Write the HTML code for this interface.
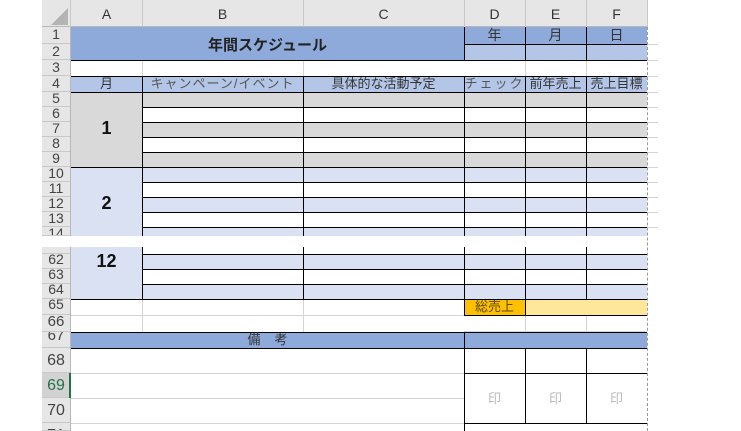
<!DOCTYPE html>
<html><head><meta charset="utf-8"><style>
*{margin:0;padding:0;box-sizing:border-box}
body{width:741px;height:431px;overflow:hidden;background:#fff;position:relative;font-family:"Liberation Sans","Noto Sans CJK JP",sans-serif}
div{position:absolute}
.f{}
.h{height:1px;background:#000}
.v{width:1px;background:#000}
.gh{height:1px;background:#d4d4d4}
.gv{width:1px;background:#d4d4d4}
.rh{left:42px;width:28px;text-align:center;color:#444;font-size:14px;overflow:hidden;border-bottom:1px solid #c8c8c8;background:#e6e6e6}
.t{text-align:center;color:#333;font-size:13px;white-space:nowrap}
</style></head><body>
<!-- column header -->
<div style="left:42px;top:0;width:605px;height:27px;background:#e6e6e6;border-bottom:1px solid #b8b8b8"></div>
<div style="left:647px;top:0;width:1px;height:27px;background:#c8c8c8"></div>
<svg style="position:absolute;left:50px;top:8px" width="18" height="18"><polygon points="18,0 18,17 1,17" fill="#b4b4b4"/></svg>
<div style="left:70px;top:0;width:1px;height:27px;background:#c8c8c8"></div>
<div class="t" style="left:71px;top:6px;width:71px;font-size:14px">A</div>
<div style="left:142px;top:0;width:1px;height:27px;background:#c8c8c8"></div>
<div class="t" style="left:142px;top:6px;width:161px;font-size:14px">B</div>
<div style="left:303px;top:0;width:1px;height:27px;background:#c8c8c8"></div>
<div class="t" style="left:303px;top:6px;width:161px;font-size:14px">C</div>
<div style="left:464px;top:0;width:1px;height:27px;background:#c8c8c8"></div>
<div class="t" style="left:464px;top:6px;width:61px;font-size:14px">D</div>
<div style="left:525px;top:0;width:1px;height:27px;background:#c8c8c8"></div>
<div class="t" style="left:525px;top:6px;width:61px;font-size:14px">E</div>
<div style="left:586px;top:0;width:1px;height:27px;background:#c8c8c8"></div>
<div class="t" style="left:586px;top:6px;width:61px;font-size:14px">F</div>

<!-- row headers -->
<div style="left:42px;top:27px;width:29px;height:404px;background:#e6e6e6"></div>
<div style="left:70px;top:27px;width:1px;height:404px;background:#b8b8b8"></div>
<div class="rh" style="top:27px;height:17px;line-height:14px">1</div>
<div class="rh" style="top:44px;height:16px;line-height:14px">2</div>
<div class="rh" style="top:60px;height:16px;line-height:14px">3</div>
<div class="rh" style="top:76px;height:16px;line-height:14px">4</div>
<div class="rh" style="top:92px;height:15px;line-height:12px">5</div>
<div class="rh" style="top:107px;height:15px;line-height:12px">6</div>
<div class="rh" style="top:122px;height:15px;line-height:12px">7</div>
<div class="rh" style="top:137px;height:15px;line-height:12px">8</div>
<div class="rh" style="top:152px;height:15px;line-height:12px">9</div>
<div class="rh" style="top:167px;height:15px;line-height:12px">10</div>
<div class="rh" style="top:182px;height:15px;line-height:12px">11</div>
<div class="rh" style="top:197px;height:15px;line-height:12px">12</div>
<div class="rh" style="top:212px;height:15px;line-height:12px">13</div>
<div class="rh" style="top:227px;height:9px;line-height:12px">14</div>
<div style="left:0;top:236px;width:741px;height:11px;background:#fff"></div>
<div class="rh" style="top:247px;height:7px;border-bottom:1px solid #c8c8c8"></div>
<div class="rh" style="top:254px;height:15px;line-height:10px">62</div>
<div class="rh" style="top:269px;height:15px;line-height:10px">63</div>
<div class="rh" style="top:284px;height:15px;line-height:10px">64</div>
<div class="rh" style="top:299px;height:16px;line-height:10px">65</div>
<div class="rh" style="top:315px;height:17px;line-height:14px;font-size:15px">66</div>
<div class="rh" style="top:332px;height:16px;line-height:8px;font-size:15px">67</div>
<div class="rh" style="top:348px;height:25px;line-height:25px;font-size:16px">68</div>
<div class="rh" style="top:373px;height:25px;line-height:25px;font-size:16px;background:#d2d2d2;color:#217346">69</div>
<div style="left:69px;top:373px;width:2px;height:25px;background:#217346"></div>
<div class="rh" style="top:398px;height:25px;line-height:25px;font-size:16px">70</div>
<div class="rh" style="top:423px;height:8px;line-height:25px;font-size:16px">71</div>

<!-- fills -->
<div style="left:71px;top:27px;width:393px;height:33px;background:#8eaadb"></div>
<div style="left:464px;top:27px;width:183px;height:17px;background:#8eaadb"></div>
<div style="left:464px;top:44px;width:183px;height:16px;background:#b4c6e7"></div>
<div style="left:71px;top:76px;width:576px;height:16px;background:#b4c6e7"></div>
<div style="left:71px;top:92px;width:71px;height:75px;background:#d9d9d9"></div>
<div style="left:142px;top:92px;width:505px;height:15px;background:#d9d9d9"></div>
<div style="left:142px;top:122px;width:505px;height:15px;background:#d9d9d9"></div>
<div style="left:142px;top:152px;width:505px;height:15px;background:#d9d9d9"></div>
<div style="left:71px;top:167px;width:71px;height:69px;background:#d9e1f2"></div>
<div style="left:142px;top:167px;width:505px;height:15px;background:#d9e1f2"></div>
<div style="left:142px;top:197px;width:505px;height:15px;background:#d9e1f2"></div>
<div style="left:142px;top:227px;width:505px;height:9px;background:#d9e1f2"></div>
<div style="left:71px;top:247px;width:71px;height:52px;background:#d9e1f2"></div>
<div style="left:142px;top:254px;width:505px;height:15px;background:#d9e1f2"></div>
<div style="left:142px;top:284px;width:505px;height:15px;background:#d9e1f2"></div>
<div style="left:464px;top:299px;width:61px;height:16px;background:#ffc000"></div>
<div style="left:525px;top:299px;width:122px;height:16px;background:#ffe699"></div>
<div style="left:71px;top:332px;width:576px;height:16px;background:#8eaadb"></div>

<!-- light gridlines -->
<div class="gv" style="left:142px;top:60px;height:16px"></div>
<div class="gv" style="left:303px;top:60px;height:16px"></div>
<div class="gv" style="left:525px;top:60px;height:16px"></div>
<div class="gv" style="left:586px;top:60px;height:16px"></div>
<div class="gv" style="left:142px;top:299px;height:33px"></div>
<div class="gv" style="left:303px;top:299px;height:33px"></div>
<div class="gv" style="left:525px;top:315px;height:17px"></div>
<div class="gv" style="left:586px;top:315px;height:17px"></div>
<div class="gh" style="left:71px;top:315px;width:393px"></div>
<div class="gh" style="left:464px;top:331px;width:183px"></div>
<div class="gh" style="left:71px;top:373px;width:393px"></div>
<div class="gh" style="left:71px;top:398px;width:393px"></div>
<div class="gh" style="left:71px;top:423px;width:393px"></div>
<div class="gh" style="left:647px;top:44px;width:11px"></div>
<div class="gh" style="left:647px;top:60px;width:11px"></div>
<div class="gh" style="left:647px;top:76px;width:11px"></div>
<div class="gh" style="left:647px;top:92px;width:11px"></div>
<div class="gh" style="left:647px;top:107px;width:11px"></div>
<div class="gh" style="left:647px;top:122px;width:11px"></div>
<div class="gh" style="left:647px;top:137px;width:11px"></div>
<div class="gh" style="left:647px;top:152px;width:11px"></div>
<div class="gh" style="left:647px;top:167px;width:11px"></div>
<div class="gh" style="left:647px;top:182px;width:11px"></div>
<div class="gh" style="left:647px;top:197px;width:11px"></div>
<div class="gh" style="left:647px;top:212px;width:11px"></div>
<div class="gh" style="left:647px;top:227px;width:11px"></div>

<!-- black horizontal lines -->
<div class="h" style="left:71px;top:60px;width:576px"></div>
<div class="h" style="left:464px;top:44px;width:183px"></div>
<div class="h" style="left:71px;top:76px;width:576px"></div>
<div class="h" style="left:71px;top:92px;width:576px"></div>
<div class="h" style="left:142px;top:107px;width:505px"></div>
<div class="h" style="left:142px;top:122px;width:505px"></div>
<div class="h" style="left:142px;top:137px;width:505px"></div>
<div class="h" style="left:142px;top:152px;width:505px"></div>
<div class="h" style="left:71px;top:167px;width:576px"></div>
<div class="h" style="left:142px;top:182px;width:505px"></div>
<div class="h" style="left:142px;top:197px;width:505px"></div>
<div class="h" style="left:142px;top:212px;width:505px"></div>
<div class="h" style="left:142px;top:227px;width:505px"></div>
<div class="h" style="left:142px;top:254px;width:505px"></div>
<div class="h" style="left:142px;top:269px;width:505px"></div>
<div class="h" style="left:142px;top:284px;width:505px"></div>
<div class="h" style="left:71px;top:299px;width:576px"></div>
<div class="h" style="left:464px;top:315px;width:183px"></div>
<div class="h" style="left:71px;top:332px;width:576px"></div>
<div class="h" style="left:71px;top:348px;width:576px"></div>
<div class="h" style="left:464px;top:373px;width:183px"></div>
<div class="h" style="left:464px;top:423px;width:183px"></div>

<!-- black vertical lines -->
<div class="v" style="left:142px;top:76px;height:160px"></div>
<div class="v" style="left:142px;top:247px;height:52px"></div>
<div class="v" style="left:303px;top:76px;height:160px"></div>
<div class="v" style="left:303px;top:247px;height:52px"></div>
<div class="v" style="left:464px;top:27px;height:33px"></div>
<div class="v" style="left:525px;top:27px;height:33px"></div>
<div class="v" style="left:586px;top:27px;height:33px"></div>
<div class="v" style="left:464px;top:76px;height:160px"></div>
<div class="v" style="left:525px;top:76px;height:160px"></div>
<div class="v" style="left:586px;top:76px;height:160px"></div>
<div class="v" style="left:464px;top:247px;height:68px"></div>
<div class="v" style="left:525px;top:247px;height:68px"></div>
<div class="v" style="left:586px;top:247px;height:52px"></div>
<div class="v" style="left:464px;top:332px;height:99px"></div>
<div class="v" style="left:525px;top:348px;height:75px"></div>
<div class="v" style="left:586px;top:348px;height:75px"></div>
<!-- dashed right edge -->
<div style="left:647px;top:27px;width:0;height:404px;border-left:1px dashed #999"></div>

<!-- text -->
<div class="t" style="left:71px;top:34px;width:393px;font-size:15px;font-weight:bold;color:#222">年間スケジュール</div>
<div class="t" style="left:464px;top:27px;width:61px;line-height:17px;font-size:14px">年</div>
<div class="t" style="left:525px;top:27px;width:61px;line-height:17px;font-size:14px">月</div>
<div class="t" style="left:586px;top:27px;width:61px;line-height:17px;font-size:14px">日</div>
<div class="t" style="left:71px;top:76px;width:71px;line-height:16px">月</div>
<div class="t" style="left:142px;top:76px;width:161px;line-height:16px;color:#555;letter-spacing:1px">キャンペーン/イベント</div>
<div class="t" style="left:303px;top:76px;width:161px;line-height:16px">具体的な活動予定</div>
<div class="t" style="left:464px;top:76px;width:61px;line-height:16px;letter-spacing:2px;color:#555">チェック</div>
<div class="t" style="left:525px;top:76px;width:61px;line-height:16px">前年売上</div>
<div class="t" style="left:586px;top:76px;width:61px;line-height:16px">売上目標</div>
<div class="t" style="left:71px;top:118px;width:71px;font-size:18px;font-weight:bold;color:#111">1</div>
<div class="t" style="left:71px;top:193px;width:71px;font-size:18px;font-weight:bold;color:#111">2</div>
<div class="t" style="left:71px;top:251px;width:71px;font-size:18px;font-weight:bold;color:#111">12</div>
<div class="t" style="left:464px;top:299px;width:61px;line-height:15px;color:#5a4a00">総売上</div>
<div class="t" style="left:71px;top:332px;width:393px;line-height:15px;color:#333;letter-spacing:14px;padding-left:14px">備考</div>
<div class="t" style="left:464px;top:388px;width:61px;color:#bbb">印</div>
<div class="t" style="left:525px;top:388px;width:61px;color:#bbb">印</div>
<div class="t" style="left:586px;top:388px;width:61px;color:#bbb">印</div>
</body></html>
